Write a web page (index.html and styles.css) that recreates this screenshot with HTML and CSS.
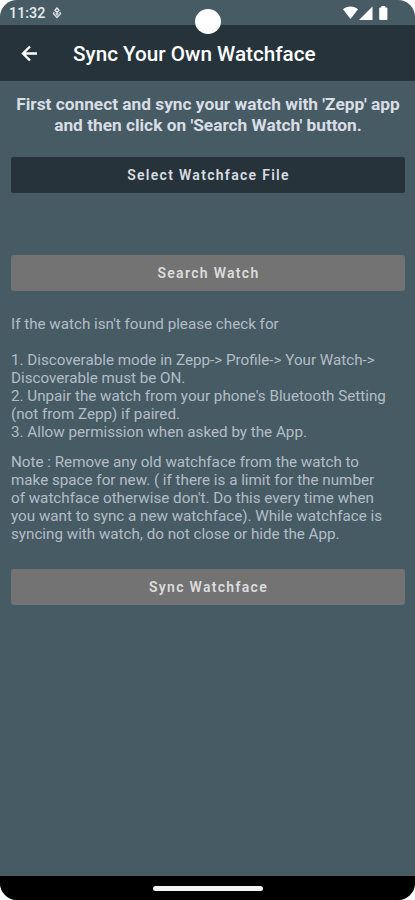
FILE: index.html
```
<!DOCTYPE html>
<html lang="en">
<head>
  <meta charset="UTF-8">
  <meta name="viewport" content="width=device-width, initial-scale=1.0">
  <title>Sync Your Own Watchface</title>
  <link rel="stylesheet" href="styles.css">
</head>
<body>
  <div class="phone">
    <div class="status-bar">
      <span class="time">11:32</span>
      <svg class="status-app" width="10" height="12" viewBox="0 0 10 12" fill="none" stroke="#dfe5e8">
        <path d="M5 1L7 3.2 5 5.400 3 3.200z" stroke-width="1.4"/>
        <path d="M2.4 5L1.400 6.600l3.600 4 3.600-4L7.600 5" stroke-width="1.3"/>
        <path d="M5 6v3M3.200 7h3.600" stroke-width="1.2"/>
      </svg>
      <svg class="status-icons" width="46" height="16" viewBox="0 0 46 16" fill="#fff">
        <path d="M0 4.2C4.3.6 10.700.6 15 4.200L7.500 14z"/>
        <path d="M29.500 1.500v13.500H16z"/>
        <path d="M38.300 1h4v1.400h1.200q.9 0 .9.9v10.800q0 .9-.9.9h-6.400q-.9 0-.9-.9V3.300q0-.9.9-.9h1.200z"/>
      </svg>
      <span class="camera"></span>
    </div>

    <header class="app-bar">
      <svg class="back" width="18" height="18" viewBox="0 0 18 18" fill="none" stroke="#fff" stroke-width="2.4">
        <path d="M17 8.5H3M10 1.500l-7 7 7 7"/>
      </svg>
      <h1>Sync Your Own Watchface</h1>
    </header>

    <main class="content">
      <p class="intro">First connect and sync your watch with 'Zepp' app<br>and then click on 'Search Watch' button.</p>

      <button class="btn btn-select">Select Watchface File</button>
      <button class="btn btn-search" disabled>Search Watch</button>

      <div class="help">
        <p>If the watch isn't found please check for</p>
        <p class="steps">1. Discoverable mode in Zepp-&gt; Profile-&gt; Your Watch-&gt;<br>Discoverable must be ON.<br>2. Unpair the watch from your phone's Bluetooth Setting<br>(not from Zepp) if paired.<br>3. Allow permission when asked by the App.</p>
        <p class="note">Note : Remove any old watchface from the watch to<br>make space for new. ( if there is a limit for the number<br>of watchface otherwise don't. Do this every time when<br>you want to sync a new watchface). While watchface is<br>syncing with watch, do not close or hide the App.</p>
      </div>

      <button class="btn btn-sync" disabled>Sync Watchface</button>
    </main>

    <footer class="nav-bar"><span class="handle"></span></footer>
  </div>
</body>
</html>
```
FILE: styles.css
```
* {
  box-sizing: border-box;
}

body {
  margin: 0;
  background: #fff;
  font-family: Roboto, "Liberation Sans", sans-serif;
}

.phone {
  display: flex;
  flex-direction: column;
  width: 415px;
  height: 900px;
  overflow: hidden;
  border-radius: 17px;
  background: #475b64;
}

/* status bar */
.status-bar {
  position: relative;
  display: flex;
  align-items: center;
  flex: none;
  height: 25px;
  padding: 1px 26px 0 9px;
}

.time {
  color: #e6eaec;
  font-size: 14.3px;
  font-weight: 500;
  line-height: 24px;
}

.status-app {
  margin-left: 7px;
}

.status-icons {
  margin-left: auto;
}

.camera {
  position: absolute;
  top: 9px;
  left: 195px;
  width: 26px;
  height: 25px;
  border-radius: 50%;
  background: #fff;
}

/* title bar */
.app-bar {
  display: flex;
  align-items: center;
  flex: none;
  height: 56px;
  padding: 1px 0 0 20px;
  background: #26333a;
}

h1 {
  margin: 0 0 0 35px;
  color: #fff;
  font-size: 20.7px;
  font-weight: 500;
  line-height: 24px;
  white-space: nowrap;
}

/* screen */
.content {
  flex: 1;
  padding: 13px 10px 0 11px;
}

.intro {
  margin: 0 -8px 22px;
  color: #d9dde4;
  font-size: 17.3px;
  font-weight: 700;
  line-height: 20.5px;
  text-align: center;
  white-space: nowrap;
}

.btn {
  display: block;
  width: 100%;
  height: 36px;
  padding: 0 0 0 1px;
  border: none;
  border-radius: 3px;
  background: #737373;
  color: #dcdcdc;
  font-family: inherit;
  font-size: 14px;
  font-weight: 600;
  letter-spacing: 1.3px;
}

.btn-select {
  margin-bottom: 62px;
  border-radius: 2px;
  background: #26333a;
  color: #d9dde2;
}

.help {
  padding-top: 23.5px;
  color: #b3bdc7;
  font-size: 15.2px;
  line-height: 18px;
  white-space: nowrap;
}

.help p {
  margin: 0;
}

.help .steps {
  margin-top: 18px;
}

.help .note {
  margin-top: 12px;
}

.btn-sync {
  margin-top: 26.5px;
}

/* gesture bar */
.nav-bar {
  display: flex;
  justify-content: center;
  flex: none;
  height: 24px;
  padding-top: 10px;
  background: #000;
}

.handle {
  width: 110px;
  height: 5px;
  border-radius: 3px;
  background: #f4f4f4;
}
```
